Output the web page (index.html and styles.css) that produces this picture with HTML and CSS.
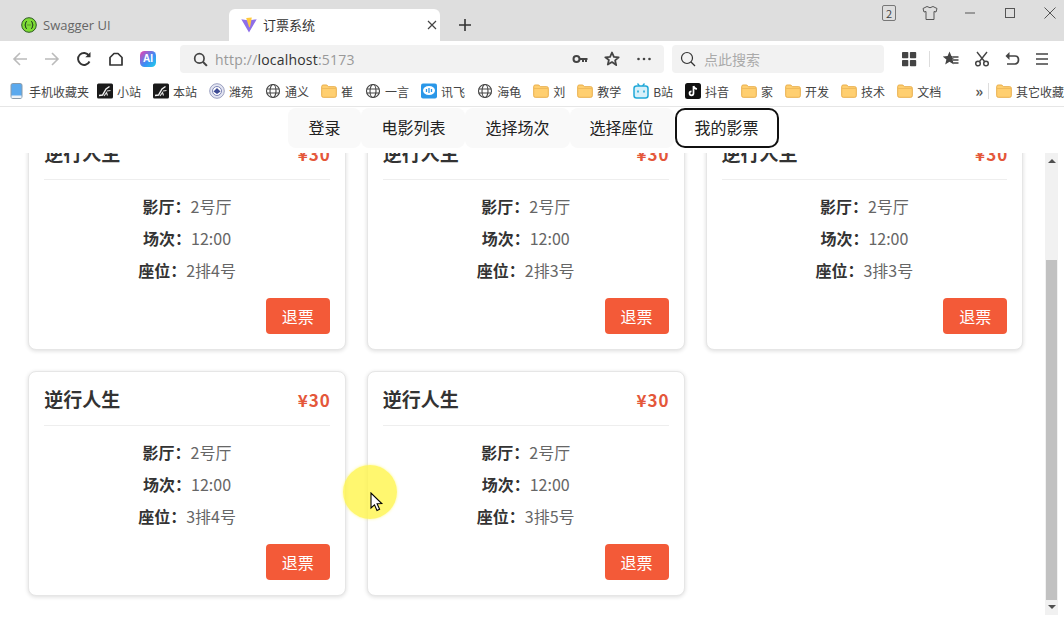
FILE: index.html
```html
<!DOCTYPE html>
<html lang="zh-CN">
<head>
    <meta charset="UTF-8">
    <title>订票系统</title>
    <link rel="stylesheet" href="styles.css">
</head>
<body>
    <svg class="defs" width="0" height="0">
        <symbol id="folder" viewBox="0 0 16 16">
            <path d="M.7 3.5q0-1.5 1.5-1.5h3.6l1.5 1.7h6.5q1.5 0 1.5 1.5v7.6q0 1.5-1.5 1.5H2.2q-1.5 0-1.5-1.5z" fill="#ffcf70" stroke="#e9ae4a"/>
            <path d="M1 5.5h14" stroke="#f0bb5c"/>
        </symbol>
        <symbol id="globe" viewBox="0 0 16 16">
            <g fill="none" stroke="#444" stroke-width="1.1">
                <circle cx="8" cy="8" r="6.5"/>
                <ellipse cx="8" cy="8" rx="3" ry="6.5"/>
                <path d="M1.5 6h13M1.5 10h13"/>
            </g>
        </symbol>
        <symbol id="stair" viewBox="0 0 16 16">
            <rect width="16" height="15" y=".5" rx="1.5" fill="#1a1a1a"/>
            <path d="M2 12.5l3.5-.5 3.5-6 3.5-2.5" fill="none" stroke="#f2f2f2" stroke-width="1.4"/>
            <path d="M7 13l2.5-3.5 1 3M10 8l3.5-.5" fill="none" stroke="#ddd" stroke-width="1.2"/>
        </symbol>
    </svg>

    <div class="tab-strip">
        <div class="tab">
            <svg class="tab-icon" viewBox="0 0 16 16"><circle cx="8" cy="8" r="7.3" fill="#7fdc35" stroke="#2c5a22"/><path d="M6 4.5q-1.4 0-1.4 1.4v1.3q0 .8-.9.8.9 0 .9.8v1.3q0 1.4 1.4 1.4M10 4.5q1.4 0 1.4 1.4v1.3q0 .8.9.8-.9 0-.9.8v1.3q0 1.4-1.4 1.4" fill="none" stroke="#1d3a20"/><path d="M6.6 8h.8M8.6 8h.8" stroke="#1d3a20"/></svg>
            <span class="tab-title tab-title-latin">Swagger UI</span>
        </div>
        <div class="tab tab-active">
            <svg class="tab-icon" viewBox="0 0 16 16"><path d="M.3 2.2L8 15.6 15.7 2.2 8 3.5z" fill="#8e6fe8"/><path d="M5.2 1l5.6-.5-1.6 9-1 1z" fill="#ffc83d"/></svg>
            <span class="tab-title">订票系统</span>
            <svg class="tab-close" viewBox="0 0 10 10"><path d="M1 1l8 8M9 1l-8 8" stroke="#444" stroke-width="1.2"/></svg>
        </div>
        <svg class="new-tab" viewBox="0 0 14 14"><path d="M7 1v12M1 7h12" stroke="#333" stroke-width="1.6"/></svg>
        <div class="window-controls">
            <span class="tab-count">2</span>
            <svg class="win-shirt" viewBox="0 0 16 16"><path d="M5 1.5L1 3.5l1 3.5 2-.5v8h8v-8l2 .5 1-3.5-4-2q-3 2.5-6 0z" fill="none" stroke="#555"/></svg>
            <svg class="win-btn" viewBox="0 0 12 12"><path d="M1 6h10" stroke="#555"/></svg>
            <svg class="win-btn" viewBox="0 0 12 12"><rect x="1.5" y="1.5" width="9" height="9" fill="none" stroke="#555"/></svg>
            <svg class="win-btn" viewBox="0 0 12 12"><path d="M.5.5l11 11M11.5.5l-11 11" stroke="#555"/></svg>
        </div>
    </div>

    <div class="toolbar">
        <button class="tool"><svg viewBox="0 0 16 16"><path d="M15 8H2M8 2L2 8l6 6" fill="none" stroke="#bbb" stroke-width="1.6"/></svg></button>
        <button class="tool"><svg viewBox="0 0 16 16"><path d="M1 8h13M8 2l6 6-6 6" fill="none" stroke="#bbb" stroke-width="1.6"/></svg></button>
        <button class="tool"><svg viewBox="0 0 16 16"><path d="M13.5 10.5A6 6 0 1 1 13 4.5" fill="none" stroke="#333" stroke-width="1.9"/><path d="M14.5 1v5.2H9.3z" fill="#333"/></svg></button>
        <button class="tool"><svg viewBox="0 0 16 16"><path d="M2 14V6.5L6 2.5h4l4 4V14z" fill="none" stroke="#333" stroke-width="1.7" stroke-linejoin="round"/></svg></button>
        <button class="tool"><svg viewBox="0 0 16 16"><defs><linearGradient id="ai" x1="0" y1="0" x2="1" y2="1"><stop offset="0" stop-color="#f03fb0"/><stop offset=".55" stop-color="#3c8cf5"/><stop offset="1" stop-color="#1fd0e8"/></linearGradient></defs><rect width="16" height="16" rx="4.5" fill="url(#ai)"/></svg><span class="ai-mark">AI</span></button>

        <div class="address-bar">
            <svg class="addr-search" viewBox="0 0 16 16"><circle cx="6.8" cy="6.8" r="5" fill="none" stroke="#444" stroke-width="1.8"/><path d="M10.5 10.5l4.3 4.3" stroke="#444" stroke-width="2.2"/></svg>
            <span class="url"><span class="url-dim">http://</span>localhost<span class="url-dim">:5173</span></span>
            <svg class="addr-icon" viewBox="0 0 16 16"><circle cx="4.5" cy="8" r="3" fill="none" stroke="#444" stroke-width="2"/><path d="M7 8h8.5M11 8v3M14 8v3" stroke="#444" stroke-width="2"/></svg>
            <svg class="addr-icon" viewBox="0 0 16 16"><path d="M8 1.5l1.9 4.4 4.8.4-3.6 3.1 1.1 4.7L8 11.1l-4.2 2.5 1.1-4.7L1.3 6.3l4.8-.4z" fill="none" stroke="#444" stroke-width="1.8" stroke-linejoin="round"/></svg>
            <svg class="addr-icon" viewBox="0 0 16 16"><g fill="#444"><circle cx="2.5" cy="8" r="1.3"/><circle cx="8" cy="8" r="1.3"/><circle cx="13.5" cy="8" r="1.3"/></g></svg>
        </div>

        <div class="search-box">
            <svg viewBox="0 0 16 16"><circle cx="7" cy="7" r="5.5" fill="none" stroke="#333" stroke-width="1.2"/><path d="M11 11l4 4" stroke="#333" stroke-width="1.2"/></svg>
            <span class="search-hint">点此搜索</span>
        </div>

        <button class="tool tool-grid"><svg viewBox="0 0 16 16"><g fill="#444"><rect x="1" y="1" width="6.3" height="6.3" rx=".8"/><rect x="8.9" y="1" width="6.3" height="6.3" rx=".8"/><rect x="1" y="8.9" width="6.3" height="6.3" rx=".8"/><rect x="8.9" y="8.9" width="6.3" height="6.3" rx=".8"/></g></svg></button>
        <span class="tool-sep"></span>
        <button class="tool tool-star"><svg viewBox="0 0 16 16"><path d="M6.5.5l1.9 4.6 5 .3-3.8 3.1 1.2 5-4.300-2.700-4.300 2.700 1.200-5L-.4 5.400l5-.3z" fill="#444"/><path d="M9.500 6h6M10 9h5.500M10 12h5.500" stroke="#fff" stroke-width="2.500"/><path d="M9.500 6h6M10 9h5.500M10 12h5.500" stroke="#444" stroke-width="1.300"/></svg></button>
        <button class="tool tool-small"><svg viewBox="0 0 16 16"><path d="M3 1l7.500 9.500M13 1L5.500 10.500" stroke="#444" stroke-width="1.400"/><circle cx="4" cy="12.500" r="2.300" fill="none" stroke="#444" stroke-width="1.500"/><circle cx="12" cy="12.500" r="2.300" fill="none" stroke="#444" stroke-width="1.500"/></svg></button>
        <button class="tool tool-small"><svg viewBox="0 0 16 16"><path d="M4 5h7q3.500 0 3.500 3.800T11 13H3" fill="none" stroke="#444" stroke-width="1.700"/><path d="M5.500 1L1.500 5l4 4z" fill="#444"/></svg></button>
        <button class="tool tool-small"><svg viewBox="0 0 16 16"><path d="M2 3h12M2 8h12M2 13h12" stroke="#444" stroke-width="1.700"/></svg></button>
    </div>

    <div class="bookmarks">
        <a class="bookmark bookmark-phone"><svg viewBox="0 0 16 16"><rect x="2" y=".5" width="11" height="15" rx="1.800" fill="#5aa9ee" stroke="#8a9aa8"/><rect x="2.500" y="12.500" width="10" height="2.500" fill="#eef3f7"/></svg>手机收藏夹</a>
        <a class="bookmark"><svg><use href="#stair"/></svg>小站</a>
        <a class="bookmark"><svg><use href="#stair"/></svg>本站</a>
        <a class="bookmark"><svg viewBox="0 0 16 16"><circle cx="8" cy="8" r="7.300" fill="#e4e6f2" stroke="#9a9fc0"/><circle cx="8" cy="8" r="4.500" fill="#fff" stroke="#7d84b5"/><path d="M4.500 8.500L8 5l3.500 3.500L8 11z" fill="#3d4a94"/></svg>潍苑</a>
        <a class="bookmark"><svg><use href="#globe"/></svg>通义</a>
        <a class="bookmark"><svg><use href="#folder"/></svg>崔</a>
        <a class="bookmark"><svg><use href="#globe"/></svg>一言</a>
        <a class="bookmark"><svg viewBox="0 0 16 16"><rect width="16" height="15" y=".5" rx="2" fill="#2a97e8"/><ellipse cx="8" cy="7.500" rx="6" ry="4.500" fill="#fff"/><path d="M5.500 6v3M8 5v5M10.500 6v3" stroke="#2a97e8" stroke-width="1.300"/></svg>讯飞</a>
        <a class="bookmark"><svg><use href="#globe"/></svg>海龟</a>
        <a class="bookmark"><svg><use href="#folder"/></svg>刘</a>
        <a class="bookmark"><svg><use href="#folder"/></svg>教学</a>
        <a class="bookmark"><svg viewBox="0 0 16 16"><path d="M4.500.5L6.500 3M11.500.5L9.500 3" stroke="#20a8d8" stroke-width="1.300"/><rect x="1" y="3" width="14" height="12" rx="2.500" fill="#d7f0fa" stroke="#20a8d8" stroke-width="1.500"/><path d="M5 7.500v2M11 7.500v2" stroke="#20a8d8" stroke-width="1.600"/></svg>B站</a>
        <a class="bookmark"><svg viewBox="0 0 16 16"><rect width="16" height="16" rx="2.500" fill="#111"/><path d="M8.500 3v7.300a2 2 0 1 1-2-2M8.500 3q.6 2.600 3.500 3" fill="none" stroke="#fff" stroke-width="1.700"/></svg>抖音</a>
        <a class="bookmark"><svg><use href="#folder"/></svg>家</a>
        <a class="bookmark"><svg><use href="#folder"/></svg>开发</a>
        <a class="bookmark"><svg><use href="#folder"/></svg>技术</a>
        <a class="bookmark"><svg><use href="#folder"/></svg>文档</a>
        <span class="more-marks">»</span>
        <span class="marks-sep"></span>
        <a class="bookmark"><svg><use href="#folder"/></svg>其它收藏</a>
    </div>

    <div class="page">
        <nav class="nav">
            <a class="nav-item">登录</a>
            <a class="nav-item">电影列表</a>
            <a class="nav-item">选择场次</a>
            <a class="nav-item">选择座位</a>
            <a class="nav-item nav-active">我的影票</a>
        </nav>

        <div class="scroll-wrap">
            <div class="scroll-view">
                <div class="ticket-grid">
                    <div class="ticket">
                        <div class="ticket-head"><h3>逆行人生</h3><span class="price">¥30</span></div>
                        <p class="row"><b>影厅：</b>2号厅</p>
                        <p class="row"><b>场次：</b>12:00</p>
                        <p class="row"><b>座位：</b>2排4号</p>
                        <div class="ticket-foot"><button class="refund">退票</button></div>
                    </div>
                    <div class="ticket">
                        <div class="ticket-head"><h3>逆行人生</h3><span class="price">¥30</span></div>
                        <p class="row"><b>影厅：</b>2号厅</p>
                        <p class="row"><b>场次：</b>12:00</p>
                        <p class="row"><b>座位：</b>2排3号</p>
                        <div class="ticket-foot"><button class="refund">退票</button></div>
                    </div>
                    <div class="ticket">
                        <div class="ticket-head"><h3>逆行人生</h3><span class="price">¥30</span></div>
                        <p class="row"><b>影厅：</b>2号厅</p>
                        <p class="row"><b>场次：</b>12:00</p>
                        <p class="row"><b>座位：</b>3排3号</p>
                        <div class="ticket-foot"><button class="refund">退票</button></div>
                    </div>
                    <div class="ticket">
                        <div class="ticket-head"><h3>逆行人生</h3><span class="price">¥30</span></div>
                        <p class="row"><b>影厅：</b>2号厅</p>
                        <p class="row"><b>场次：</b>12:00</p>
                        <p class="row"><b>座位：</b>3排4号</p>
                        <div class="ticket-foot"><button class="refund">退票</button></div>
                    </div>
                    <div class="ticket">
                        <div class="ticket-head"><h3>逆行人生</h3><span class="price">¥30</span></div>
                        <p class="row"><b>影厅：</b>2号厅</p>
                        <p class="row"><b>场次：</b>12:00</p>
                        <p class="row"><b>座位：</b>3排5号</p>
                        <div class="ticket-foot"><button class="refund">退票</button></div>
                    </div>
                </div>
            </div>
            <div class="scrollbar">
                <span class="arrow-up"></span>
                <span class="thumb"></span>
                <span class="arrow-down"></span>
            </div>
        </div>
    </div>

    <!-- recorder's cursor highlight -->
    <div class="cursor-glow"></div>
    <svg class="cursor" viewBox="0 0 14 20"><path d="M1 1v15l3.500-3.200 2.500 5.700 2.600-1.200-2.500-5.500 4.700-.3z" fill="#fff" stroke="#000" stroke-width="1.100"/></svg>
</body>
</html>
```

FILE: styles.css
```css
* {
    box-sizing: border-box;
}
html, body {
    height: 100%;
}
body {
    margin: 0;
    display: flex;
    flex-direction: column;
    overflow: hidden;
    background: #fff;
    color: #333;
    font-family: "Noto Sans CJK SC", "Open Sans", sans-serif;
}
.defs {
    position: absolute;
}

/* browser tabs */
.tab-strip {
    display: flex;
    align-items: flex-end;
    height: 41px;
    background: #dedede;
    flex-shrink: 0;
}
.tab {
    display: flex;
    align-items: center;
    width: 211px;
    height: 32px;
    padding-left: 12px;
    border-radius: 6px 6px 0 0;
}
.tab:first-child {
    width: 229px;
    padding-left: 21px;
}
.tab-active {
    background: #fff;
}
.tab-icon {
    width: 16px;
    height: 16px;
    margin-right: 6px;
}
.tab-title {
    margin-bottom: 1px;
    font-size: 13px;
    color: #333;
}
.tab-title-latin {
    color: #666;
    font-family: "Open Sans", sans-serif;
}
.tab-close {
    width: 10px;
    height: 10px;
    margin-left: auto;
    margin-right: 3px;
}
.new-tab {
    width: 14px;
    height: 14px;
    margin: 0 0 9px 18px;
}
.window-controls {
    display: flex;
    align-items: center;
    align-self: flex-start;
    margin: 5px 0 0 auto;
    padding-right: 8px;
}
.tab-count {
    width: 14px;
    height: 16px;
    border: 1px solid #777;
    border-radius: 2px;
    font-size: 11px;
    line-height: 14px;
    text-align: center;
    color: #444;
}
.win-shirt {
    width: 16px;
    height: 16px;
    margin: 0 -2px 0 26px;
}
.win-btn {
    width: 12px;
    height: 12px;
    margin-left: 28px;
}

/* toolbar */
.toolbar {
    display: flex;
    align-items: center;
    height: 32px;
    padding-left: 4px;
    flex-shrink: 0;
}
.tool {
    position: relative;
    display: flex;
    align-items: center;
    justify-content: center;
    width: 32px;
    height: 28px;
    padding: 0;
    border: 0;
    background: none;
    margin-top: 4px;
}
.tool svg {
    width: 16px;
    height: 16px;
}
.tool-grid {
    margin-left: 9px;
}
.tool-star {
    width: 32px;
}
.tool-small {
    width: 30px;
}
.tool-sep {
    width: 1px;
    height: 16px;
    margin: 4px 5px 0 4px;
    background: #ddd;
}
.ai-mark {
    position: absolute;
    left: 0;
    right: 0;
    top: 6px;
    font-size: 10px;
    line-height: 15px;
    font-weight: 700;
    text-align: center;
    color: #fff;
}
.address-bar {
    display: flex;
    align-items: center;
    width: 484px;
    height: 28px;
    margin: 4px 8px 0 16px;
    padding: 0 12px 0 13px;
    border-radius: 4px;
    background: #f2f2f2;
}
.addr-search {
    width: 15px;
    height: 15px;
    margin-right: 7px;
}
.url {
    font-size: 14px;
    color: #333;
    flex: 1;
    letter-spacing: .2px;
    font-family: "Open Sans", sans-serif;
}
.url-dim {
    color: #999;
}
.addr-icon {
    width: 16px;
    height: 16px;
    margin-left: 16px;
}
.search-box {
    display: flex;
    align-items: center;
    width: 212px;
    height: 28px;
    margin-top: 4px;
    padding-left: 8px;
    border-radius: 4px;
    background: #f2f2f2;
}
.search-box svg {
    width: 16px;
    height: 16px;
    margin-right: 8px;
}
.search-hint {
    font-size: 14px;
    color: #aaa;
}

/* bookmarks bar */
.bookmarks {
    display: flex;
    align-items: center;
    gap: 12px;
    height: 34px;
    padding: 3px 0 0 9px;
    border-bottom: 1px solid #e6e6e6;
    flex-shrink: 0;
    overflow: hidden;
    white-space: nowrap;
}
.bookmark {
    display: flex;
    align-items: center;
    flex-shrink: 0;
    font-size: 12px;
    color: #444;
}
.bookmark svg {
    width: 16px;
    height: 16px;
    margin-right: 4px;
}
.bookmark-phone {
    margin-right: -4px;
}
.more-marks {
    width: 9px;
    margin-left: 22px;
    font-size: 15px;
    line-height: 16px;
    font-weight: 700;
    color: #555;
}
.marks-sep {
    width: 1px;
    height: 16px;
    margin-left: -8px;
    background: #ddd;
}
.marks-sep + .bookmark {
    margin-left: -5px;
}

/* page */
.page {
    flex: 1;
    display: flex;
    flex-direction: column;
    min-height: 0;
}
.nav {
    display: flex;
    justify-content: center;
    height: 46px;
    padding: 1px 0 5px 3px;
    flex-shrink: 0;
}
.nav-item {
    display: flex;
    align-items: center;
    height: 40px;
    padding: 0 20px 2px;
    border-radius: 8px;
    background: #f9f9f9;
    font-size: 16px;
    color: #222;
}
.nav-item:first-child {
    padding-right: 21px;
}
.nav-active {
    padding: 0 18px 2px;
    margin-left: 1px;
    border: 2px solid #111;
    border-radius: 10px;
    background: #fff;
}
.scroll-wrap {
    flex: 1;
    display: flex;
    min-height: 0;
}
.scroll-view {
    flex: 1;
    overflow: hidden;
}
.ticket-grid {
    display: grid;
    grid-template-columns: repeat(3, 1fr);
    gap: 21px;
    margin-top: -28px;
    padding: 0 21.8px 0 28.2px;
}
.ticket {
    height: 225px;
    padding: 13px 15px 14px;
    border: 1px solid #e6e6e6;
    border-radius: 8px;
    background: #fff;
    box-shadow: 0 1px 4px rgba(0,0,0,0.14);
}
.ticket-head {
    display: flex;
    justify-content: space-between;
    align-items: center;
    padding-bottom: 12px;
    margin-bottom: 10px;
    border-bottom: 1px solid #eee;
}
.ticket-head h3 {
    margin: 0;
    font-size: 19px;
    line-height: 28px;
    font-weight: 700;
    color: #333;
}
.price {
    font-size: 17px;
    font-weight: 700;
    letter-spacing: 1px;
    margin-right: -1px;
    color: #e4573a;
}
.row {
    margin: 0;
    font-size: 16px;
    line-height: 32px;
    text-align: center;
    color: #666;
}
.row b {
    color: #333;
}
.ticket-foot {
    display: flex;
    justify-content: flex-end;
    margin-top: 12px;
}
.refund {
    width: 64px;
    height: 36px;
    padding: 0;
    border: 0;
    border-radius: 4px;
    background: #f35a38;
    color: #fff;
    font-family: inherit;
    font-size: 16px;
}

/* scrollbar */
.scrollbar {
    display: flex;
    flex-direction: column;
    align-items: center;
    width: 13px;
    margin: 0 6px 5px 0;
    background: #f1f1f1;
}
.arrow-up, .arrow-down {
    width: 0;
    height: 0;
    border-left: 4px solid transparent;
    border-right: 4px solid transparent;
}
.arrow-up {
    margin-top: 6px;
    border-bottom: 4px solid #505050;
}
.thumb {
    width: 11px;
    height: 340px;
    margin: 97px 0 5px;
    background: #c1c1c1;
}
.arrow-down {
    border-top: 4px solid #505050;
}

/* cursor highlight from the screen recording */
.cursor-glow {
    position: absolute;
    left: 343px;
    top: 465px;
    width: 54px;
    height: 54px;
    border-radius: 50%;
    background: rgba(255, 245, 70, 0.78);
    box-shadow: 0 0 3px rgba(255, 245, 70, 0.6);
}
.cursor {
    position: absolute;
    left: 370px;
    top: 492px;
    width: 14px;
    height: 20px;
}
```
